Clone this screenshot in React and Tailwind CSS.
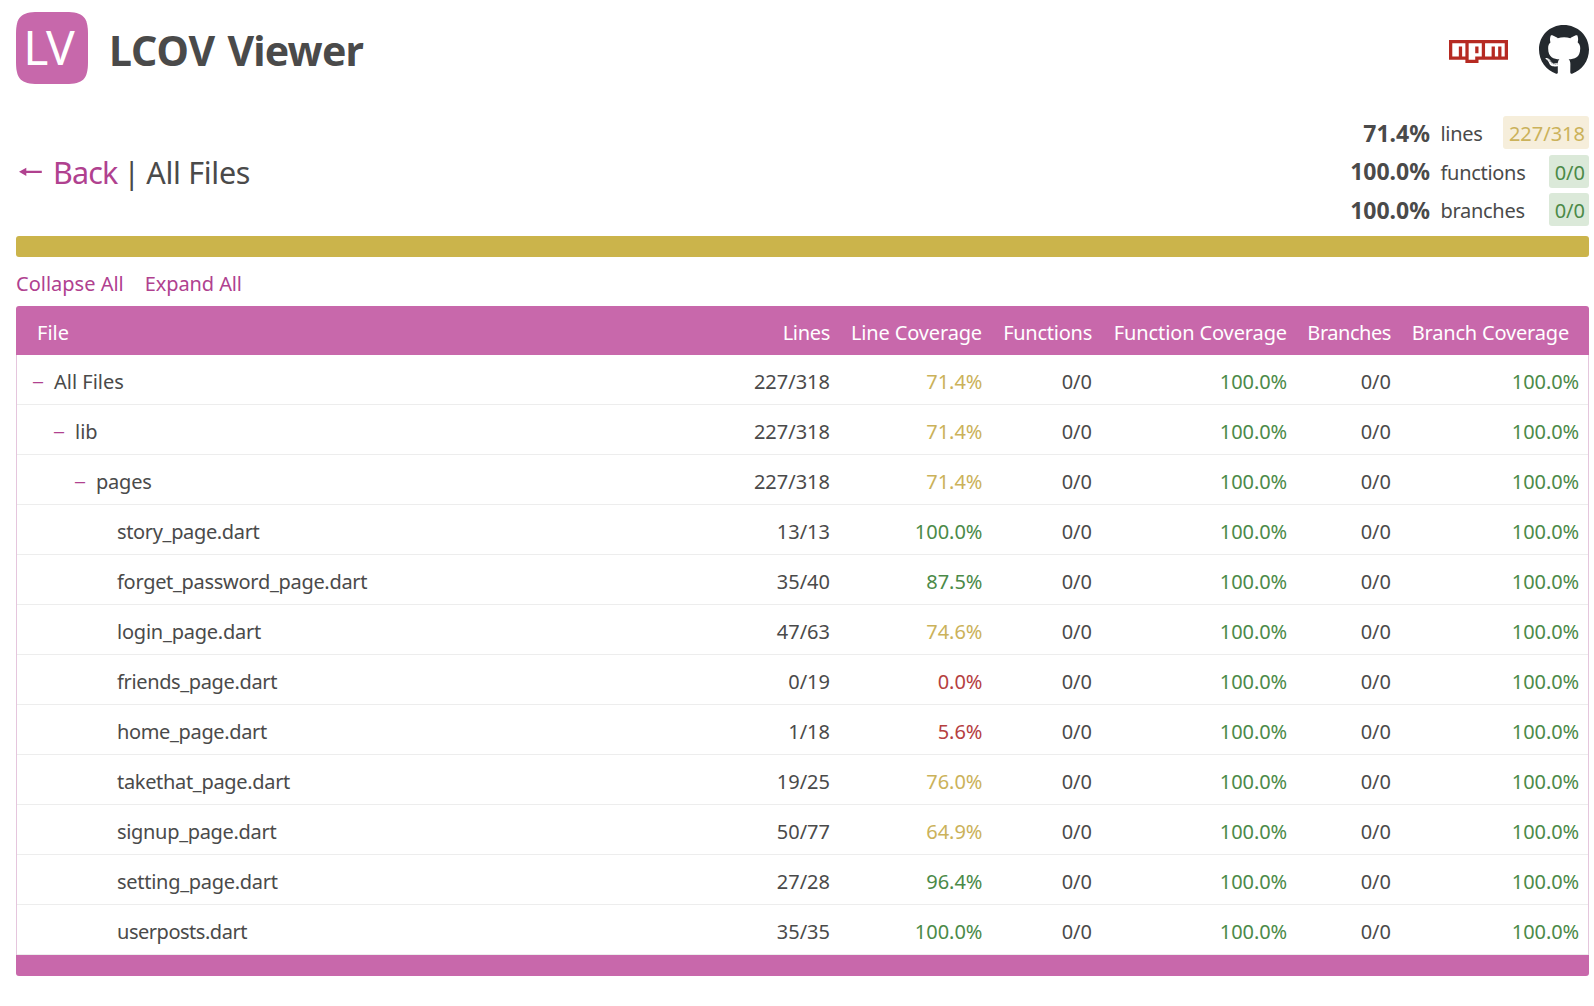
import { FaGithub } from "react-icons/fa";

const GOLD = "text-[#cbb25a]";
const GREEN = "text-[#4b8a48]";
const RED = "text-[#b5403f]";

const columns = [
  { label: "Lines", className: "tracking-[-0.3px] pr-[10px]" },
  { label: "Line Coverage", className: "tracking-[-0.15px] pr-[11px]" },
  { label: "Functions", className: "tracking-[-0.25px] pr-[11px]" },
  { label: "Function Coverage", className: "tracking-[-0.12px] pr-[10px]" },
  { label: "Branches", className: "tracking-[-0.45px] pr-[11px]" },
  { label: "Branch Coverage", className: "tracking-[-0.18px] pr-[19px]" },
];

const rows = [
  { name: "All Files", depth: 0, folder: true, lines: "227/318", pct: "71.4%", tone: GOLD, track: "tracking-[0px]" },
  { name: "lib", depth: 1, folder: true, lines: "227/318", pct: "71.4%", tone: GOLD, track: "tracking-[0px]" },
  { name: "pages", depth: 2, folder: true, lines: "227/318", pct: "71.4%", tone: GOLD, track: "tracking-[-0.2px]" },
  { name: "story_page.dart", depth: 3, lines: "13/13", pct: "100.0%", tone: GREEN, track: "tracking-[-0.35px]" },
  { name: "forget_password_page.dart", depth: 3, lines: "35/40", pct: "87.5%", tone: GREEN, track: "tracking-[-0.3px]" },
  { name: "login_page.dart", depth: 3, lines: "47/63", pct: "74.6%", tone: GOLD, track: "tracking-[-0.22px]" },
  { name: "friends_page.dart", depth: 3, lines: "0/19", pct: "0.0%", tone: RED, track: "tracking-[-0.36px]" },
  { name: "home_page.dart", depth: 3, lines: "1/18", pct: "5.6%", tone: RED, track: "tracking-[-0.35px]" },
  { name: "takethat_page.dart", depth: 3, lines: "19/25", pct: "76.0%", tone: GOLD, track: "tracking-[-0.32px]" },
  { name: "signup_page.dart", depth: 3, lines: "50/77", pct: "64.9%", tone: GOLD, track: "tracking-[-0.32px]" },
  { name: "setting_page.dart", depth: 3, lines: "27/28", pct: "96.4%", tone: GREEN, track: "tracking-[-0.28px]" },
  { name: "userposts.dart", depth: 3, lines: "35/35", pct: "100.0%", tone: GREEN, track: "tracking-[-0.48px]" },
];

const indents = ["pl-[15px]", "pl-[36px]", "pl-[57px]", "pl-[78px]"];

const stats = [
  { pct: "71.4%", label: "lines", value: "227/318", badge: "bg-[#f6eedb] text-[#cbb25a]" },
  { pct: "100.0%", label: "functions", value: "0/0", badge: "bg-[#dbe9d9] text-[#4b8a48]" },
  { pct: "100.0%", label: "branches", value: "0/0", badge: "bg-[#dbe9d9] text-[#4b8a48]" },
];

const tableGrid = "grid grid-cols-[minmax(0,1fr)_120px_153px_110px_194px_105px_186px]";

function Header() {
  return (
    <header className="flex h-[84px] items-start justify-between pt-3">
      <div className="flex">
        <svg viewBox="0 0 72 72" className="size-[72px]">
          <path
            fill="#c768ab"
            d="M0 22C0 5 5 0 22 0H50C67 0 72 5 72 22V50C72 67 67 72 50 72H22C5 72 0 67 0 50Z"
          />
          <text x="7.2" y="53.3" fill="#fff" className="text-[48px] tracking-[-1.5px]">
            LV
          </text>
        </svg>
        <h1 className="pl-[21px] text-[41px] leading-[76px] font-bold">
          LCOV <span className="ml-[1.5px] tracking-[-0.8px]">Viewer</span>
        </h1>
      </div>
      <div className="flex">
        <svg viewBox="0 0 18 7" className="mt-[28px] h-[23px] w-[59px]" role="img" aria-label="npm">
          <path
            fill="#b62a22"
            d="M0 0h18v6H9v1H5V6H0zM1 5h2V2h1v3h1V1H1zM6 1v5h2V5h2V1zM8 2h1v2H8zM11 1v4h2V2h1v3h1V2h1v3h1V1z"
          />
        </svg>
        <FaGithub className="mt-[12px] ml-[31px] h-[52px] w-[50px] text-[#24292e]" />
      </div>
    </header>
  );
}

function Summary() {
  return (
    <section className="mt-8 flex h-[120px] justify-between">
      <h2 className="flex pl-[2px] text-[30.5px] leading-[113px]">
        <a className="flex text-[#b0418f]">
          <svg viewBox="0 0 24 10" className="mt-[51px] mr-[11px] h-[10px] w-[24px]" fill="currentColor">
            <path d="M1 4.8L8.3.7v3H23.8v2.3H8.3v3z" />
          </svg>
          <span className="tracking-[-0.9px]">Back</span>
        </a>
        <span className="w-[29px] pl-[6px]">|</span>
        <span className="tracking-[-0.3px]">All Files</span>
      </h2>
      <div className="flex flex-col gap-[5.5px]">
        {stats.map((s) => (
          <div key={s.label} className="flex h-[33px] items-center justify-end leading-[33px]">
            <span className="pt-px text-[23px] font-bold">{s.pct}</span>
            <span className="w-[96px] pt-[2px] pl-[10.5px] text-[20px] tracking-[-0.3px]">{s.label}</span>
            <span className="flex w-[63px] justify-end text-[20px]">
              <span className={"h-[33px] rounded-[3px] pr-[4px] pl-[6px] leading-[35px] " + s.badge}>{s.value}</span>
            </span>
          </div>
        ))}
      </div>
    </section>
  );
}

export default function App() {
  return (
    <main className="h-[1006px] bg-white pr-[5px] pl-4 font-['Noto_Sans',sans-serif] text-[20px] text-[#4a4a4a]">
      <Header />
      <Summary />
      <div className="h-[21px] rounded-[3px] bg-[#cbb44b]" />
      <nav className="flex h-[49px] gap-[21px] leading-[54px] text-[#b0418f]">
        <a>Collapse All</a>
        <a className="tracking-[-0.1px]">Expand All</a>
      </nav>
      <div>
        <div className={tableGrid + " h-[49px] rounded-t-[3px] bg-[#c868ab] px-px text-right leading-[53px] text-white"}>
          <div className="pl-[20px] text-left">File</div>
          {columns.map((c) => (
            <div key={c.label} className={"whitespace-nowrap " + c.className}>
              {c.label}
            </div>
          ))}
        </div>
        <div className="border-x border-[#e5c6dd]">
          {rows.map((r) => (
            <div key={r.name} className={tableGrid + " h-[50px] border-b border-[#ededed] text-right leading-[53px]"}>
              <div className={"flex text-left " + indents[r.depth]}>
                <span className="-mt-[2px] w-[22px] text-[24px] font-light text-[#b0418f]">{r.folder ? "–" : ""}</span>
                <span className={r.track}>{r.name}</span>
              </div>
              <div className="pr-[10px]">{r.lines}</div>
              <div className={"pr-[10.5px] " + r.tone}>{r.pct}</div>
              <div className="pr-[11px]">0/0</div>
              <div className={"pr-[10px] tracking-[-0.1px] " + GREEN}>100.0%</div>
              <div className="pr-[11px]">0/0</div>
              <div className={"pr-[9px] tracking-[-0.1px] " + GREEN}>100.0%</div>
            </div>
          ))}
        </div>
        <div className="h-[21px] rounded-b-[3px] bg-[#c868ab]" />
      </div>
    </main>
  );
}
